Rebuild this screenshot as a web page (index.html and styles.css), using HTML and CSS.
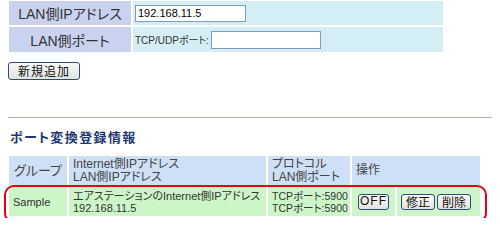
FILE: index.html
```html
<!DOCTYPE html>
<html lang="ja">
<head>
  <meta charset="UTF-8">
  <title>ポート変換</title>
  <link rel="stylesheet" href="styles.css">
</head>
<body>
  <table class="form-table">
    <tr class="row-ip">
      <th>LAN側IPアドレス</th>
      <td><input type="text" class="ip-input" value="192.168.11.5"></td>
    </tr>
    <tr class="row-port">
      <th>LAN側ポート</th>
      <td><span class="small">TCP/UDPポート:</span><input type="text" class="port-input"></td>
    </tr>
  </table>

  <button type="button" class="btn btn-add">新規追加</button>

  <hr class="sep">

  <h2 class="section-title">ポート変換登録情報</h2>

  <div class="list-wrap">
    <table class="list-table">
      <colgroup>
        <col class="w-group">
        <col class="w-ip">
        <col class="w-proto">
        <col class="w-off">
        <col class="w-edit">
      </colgroup>
      <tr class="head">
        <th class="col-group">グループ</th>
        <th>Internet側IPアドレス<br>LAN側IPアドレス</th>
        <th>プロトコル<br>LAN側ポート</th>
        <th colspan="2">操作</th>
      </tr>
      <tr class="entry">
        <td>Sample</td>
        <td>エアステーションのInternet側IPアドレス<br>192.168.11.5</td>
        <td class="col-proto">TCPポート:5900<br>TCPポート:5900</td>
        <td class="col-off"><button type="button" class="btn btn-sm">OFF</button></td>
        <td class="col-edit"><button type="button" class="btn btn-sm">修正</button><button type="button" class="btn btn-sm">削除</button></td>
      </tr>
    </table>
    <div class="highlight"></div>
  </div>
</body>
</html>
```

FILE: styles.css
```css
body { margin: 0; padding: 0 7px; font-family: "Liberation Sans", "Noto Sans CJK JP", sans-serif; font-feature-settings: "palt"; color: #222; background: #fff; }

.form-table { border-spacing: 2px; margin-top: -1px; }
.form-table th { width: 122px; padding: 0; background: #c9d3ef; font-weight: normal; font-size: 14px; color: #333; text-align: center; }
.form-table td { width: 306px; padding: 0 2px; background: #d3eef4; }
.row-ip th, .row-ip td { height: 24px; }
.row-port th, .row-port td { height: 25px; }
.ip-input { width: 105px; height: 15px; margin: 0; padding: 0 2px; border: 1px solid #7f9db9; font: 11px "Liberation Sans", sans-serif; display: block; }
.port-input { width: 104px; height: 16px; margin: 0; padding: 0 2px; border: 1px solid #7f9db9; vertical-align: middle; }
.small { font-size: 10px; color: #333; vertical-align: middle; margin-right: 2px; }

.btn { font-family: "Noto Sans CJK JP", sans-serif; color: #111; background: linear-gradient(#fafafa, #e2e2de); border: 1px solid #2c4a7c; border-radius: 3px; cursor: pointer; padding: 0; }
.btn-add { display: block; margin: 8px 0 0 1px; width: 72px; height: 18px; font-size: 12px; line-height: 14px; letter-spacing: 1px; }

.sep { margin: 37px 0 0 1px; border: 0; height: 1px; background: #b7b3a3; width: 484px; }

.section-title { margin: 13px 0 0 3px; font-size: 13px; font-weight: bold; color: #1d3772; letter-spacing: 1.4px; line-height: 14px; }

.list-wrap { position: relative; margin-top: 9px; }
.list-table { border-spacing: 2px; table-layout: fixed; width: 475px; }
.w-group { width: 58px; }
.w-ip { width: 197px; }
.w-proto { width: 82px; }
.w-off { width: 43px; }
.w-edit { width: 83px; }
.list-table th, .list-table td { box-sizing: border-box; white-space: nowrap; height: 29px; }
.list-table th { background: #cde0f5; font-weight: normal; font-size: 12px; line-height: 13px; color: #444; text-align: left; padding: 0 4px; }
.list-table .col-group { font-size: 13px; text-align: center; padding: 0; }
.list-table td { background: #ccf6c8; font-size: 11px; line-height: 12px; color: #333; padding: 0 4px; }
.list-table .col-proto { font-size: 10.5px; }
.btn-sm { height: 16px; font-size: 12px; line-height: 13px; vertical-align: middle; }
.col-off .btn-sm { width: 31px; margin-left: 2px; font-family: "Liberation Sans", sans-serif; letter-spacing: 1px; }
.col-edit .btn-sm { width: 34px; margin-right: 2px; }

.highlight { position: absolute; left: -3px; top: 31px; width: 479px; height: 34px; border: 2px solid #e60012; border-radius: 10px; pointer-events: none; }
```
